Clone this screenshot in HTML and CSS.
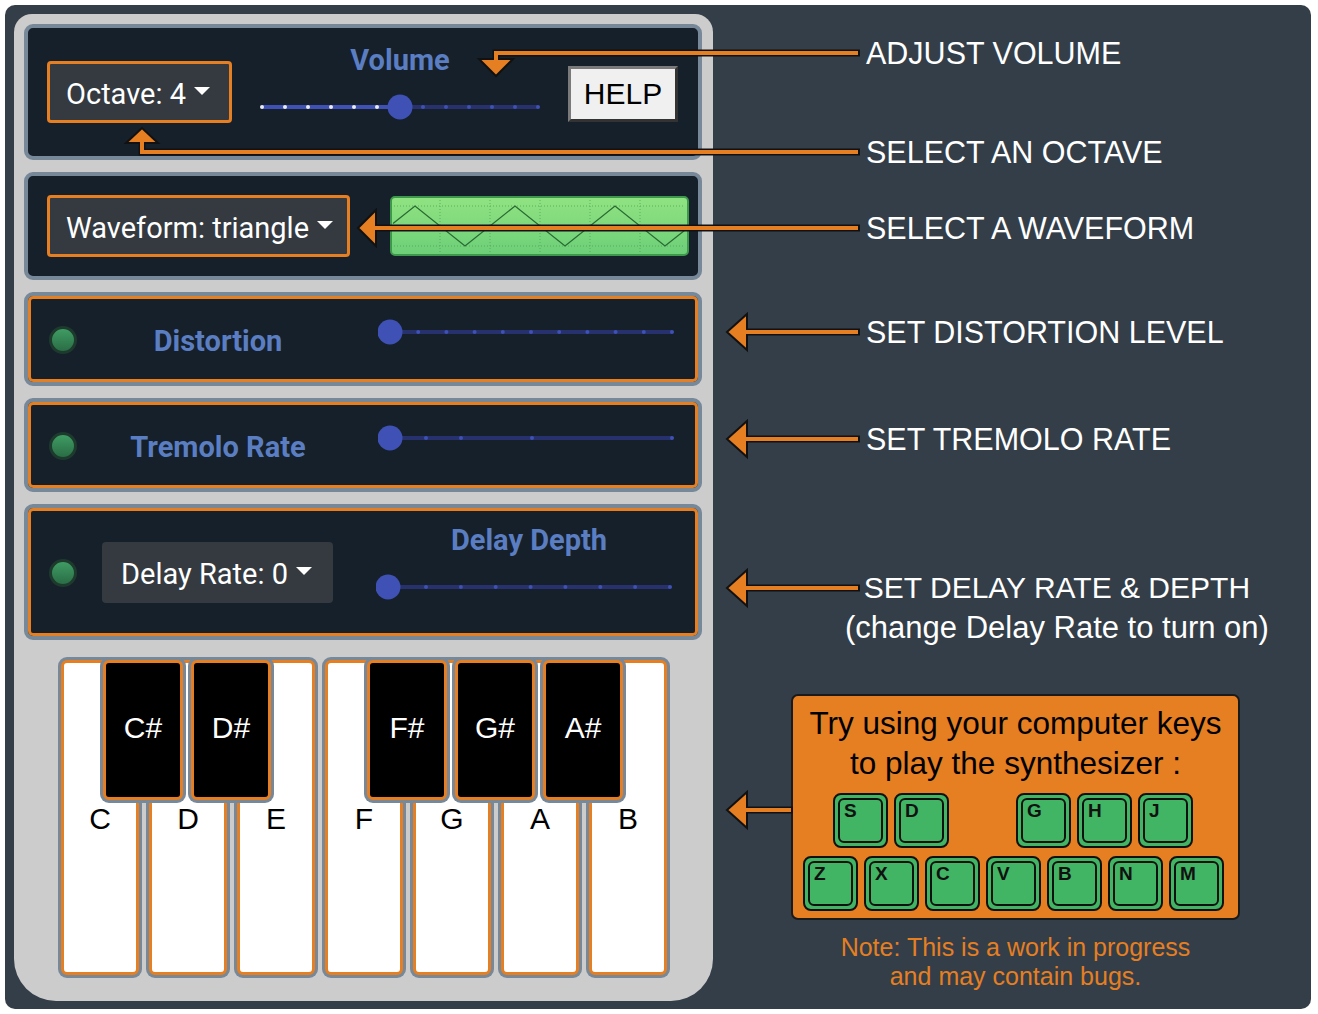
FILE: index.html
```html
<!DOCTYPE html>
<html lang="en">
<head>
<meta charset="utf-8">
<title>Synthesizer help</title>
<link rel="stylesheet" href="styles.css">
</head>
<body>
<div class="stage">
  <div class="frame">
    <div class="synth">
      <div class="panel panel-top">
        <div class="select orange sel-octave">Octave: 4<span class="caret"></span></div>
        <div class="volume">
          <div class="label">Volume</div>
          <svg class="slider vol-slider" width="280" height="26" viewBox="0 0 280 26">
            <line x1="2" y1="13" x2="140" y2="13" stroke="#3f51b5" stroke-width="4"/>
            <line x1="140" y1="13" x2="278" y2="13" stroke="#26316e" stroke-width="4"/>
            <g fill="#e8eaf6"><circle cx="2" cy="13" r="2"/><circle cx="25" cy="13" r="2"/><circle cx="48" cy="13" r="2"/><circle cx="71" cy="13" r="2"/><circle cx="94" cy="13" r="2"/><circle cx="117" cy="13" r="2"/></g>
            <g fill="#3f51b5"><circle cx="163" cy="13" r="2"/><circle cx="186" cy="13" r="2"/><circle cx="209" cy="13" r="2"/><circle cx="232" cy="13" r="2"/><circle cx="255" cy="13" r="2"/><circle cx="278" cy="13" r="2"/></g>
            <circle cx="140" cy="13" r="12.5" fill="#3f51b5"/>
          </svg>
        </div>
        <div class="help-btn">HELP</div>
      </div>

      <div class="panel panel-wave">
        <div class="select orange sel-wave">Waveform: triangle<span class="caret"></span></div>
        <svg class="scope" width="299" height="60" viewBox="0 0 299 60">
          <defs>
            <linearGradient id="scopeg" x1="0" y1="0" x2="0" y2="1">
              <stop offset="0" stop-color="#91e381"/>
              <stop offset="1" stop-color="#6ccf78"/>
            </linearGradient>
          </defs>
          <rect x="1" y="1" width="297" height="58" rx="4" fill="url(#scopeg)" stroke="#3d984b" stroke-width="2"/>
          <g stroke="#4f9e56" stroke-width="1" stroke-dasharray="1 2" opacity="0.75">
            <line x1="4" y1="10" x2="295" y2="10"/>
            <line x1="4" y1="50" x2="295" y2="50"/>
            <line x1="50" y1="4" x2="50" y2="56"/>
            <line x1="100" y1="4" x2="100" y2="56"/>
            <line x1="150" y1="4" x2="150" y2="56"/>
            <line x1="200" y1="4" x2="200" y2="56"/>
            <line x1="250" y1="4" x2="250" y2="56"/>
          </g>
          <polyline points="3,27.6 25,10 75,50 125,10 175,50 225,10 275,50 297,32.4" fill="none" stroke="#2a6a33" stroke-width="1.3"/>
        </svg>
      </div>

      <div class="panel hl panel-fx">
        <div class="led"></div>
        <div class="label fx-label">Distortion</div>
        <svg class="slider fx-slider" width="298" height="26" viewBox="0 0 298 26">
          <line x1="12" y1="13" x2="294" y2="13" stroke="#26316e" stroke-width="4"/>
          <g fill="#3f51b5"><circle cx="40.2" cy="13" r="2"/><circle cx="68.4" cy="13" r="2"/><circle cx="96.6" cy="13" r="2"/><circle cx="124.8" cy="13" r="2"/><circle cx="153" cy="13" r="2"/><circle cx="181.2" cy="13" r="2"/><circle cx="209.4" cy="13" r="2"/><circle cx="237.6" cy="13" r="2"/><circle cx="265.8" cy="13" r="2"/><circle cx="294" cy="13" r="2"/></g>
          <circle cx="12" cy="13" r="12.5" fill="#3f51b5"/>
        </svg>
      </div>

      <div class="panel hl panel-fx">
        <div class="led"></div>
        <div class="label fx-label">Tremolo Rate</div>
        <svg class="slider fx-slider" width="298" height="26" viewBox="0 0 298 26">
          <line x1="12" y1="13" x2="294" y2="13" stroke="#26316e" stroke-width="4"/>
          <g fill="#3f51b5"><circle cx="48" cy="13" r="2"/><circle cx="83" cy="13" r="2"/><circle cx="154" cy="13" r="2"/><circle cx="294" cy="13" r="2"/></g>
          <circle cx="12" cy="13" r="12.5" fill="#3f51b5"/>
        </svg>
      </div>

      <div class="panel hl panel-delay">
        <div class="led"></div>
        <div class="select sel-delay">Delay Rate: 0<span class="caret"></span></div>
        <div class="depth">
          <div class="label depth-label">Delay Depth</div>
          <svg class="slider" width="298" height="26" viewBox="0 0 298 26">
            <line x1="12" y1="13" x2="294" y2="13" stroke="#26316e" stroke-width="4"/>
            <g fill="#3f51b5"><circle cx="50" cy="13" r="2"/><circle cx="84.9" cy="13" r="2"/><circle cx="119.7" cy="13" r="2"/><circle cx="154.6" cy="13" r="2"/><circle cx="189.4" cy="13" r="2"/><circle cx="224.3" cy="13" r="2"/><circle cx="259.1" cy="13" r="2"/><circle cx="294" cy="13" r="2"/></g>
            <circle cx="12" cy="13" r="12.5" fill="#3f51b5"/>
          </svg>
        </div>
      </div>

      <div class="piano">
        <div class="wkey"><span class="bkey">C#</span>C</div>
        <div class="wkey"><span class="bkey">D#</span>D</div>
        <div class="wkey">E</div>
        <div class="wkey"><span class="bkey">F#</span>F</div>
        <div class="wkey"><span class="bkey">G#</span>G</div>
        <div class="wkey"><span class="bkey">A#</span>A</div>
        <div class="wkey">B</div>
      </div>
    </div>

    <div class="notes">
      <p class="note n-volume">ADJUST VOLUME</p>
      <p class="note n-octave">SELECT AN OCTAVE</p>
      <p class="note n-wave">SELECT A WAVEFORM</p>
      <p class="note n-dist">SET DISTORTION LEVEL</p>
      <p class="note n-trem">SET TREMOLO RATE</p>
      <div class="note-delay">
        <p class="note-main">SET DELAY RATE &amp; DEPTH</p>
        <p class="note-sub">(change Delay Rate to turn on)</p>
      </div>
      <div class="help-wrap">
        <div class="keyhelp">
          <p class="keyhelp-text">Try using your computer keys<br>to play the synthesizer :</p>
          <div class="keyrow keyrow-top">
            <div class="kbkey"><span class="cap">S</span></div>
            <div class="kbkey"><span class="cap">D</span></div>
            <div class="kbkey ghost"><span class="cap">F</span></div>
            <div class="kbkey"><span class="cap">G</span></div>
            <div class="kbkey"><span class="cap">H</span></div>
            <div class="kbkey"><span class="cap">J</span></div>
          </div>
          <div class="keyrow">
            <div class="kbkey"><span class="cap">Z</span></div>
            <div class="kbkey"><span class="cap">X</span></div>
            <div class="kbkey"><span class="cap">C</span></div>
            <div class="kbkey"><span class="cap">V</span></div>
            <div class="kbkey"><span class="cap">B</span></div>
            <div class="kbkey"><span class="cap">N</span></div>
            <div class="kbkey"><span class="cap">M</span></div>
          </div>
        </div>
        <p class="wip">Note: This is a work in progress<br>and may contain bugs.</p>
      </div>
    </div>
  </div>

  <svg class="arrows" width="1318" height="1014" viewBox="0 0 1318 1014">
    <g fill="none" stroke="#111" stroke-width="7">
      <path d="M860 53 H496 V60"/>
      <path d="M860 152 H142 V142"/>
      <path d="M860 228 H374"/>
      <path d="M860 332 H745"/>
      <path d="M860 439 H745"/>
      <path d="M860 588 H745"/>
      <path d="M793 810 H745"/>
    </g>
    <g fill="#e67e22" stroke="#111" stroke-width="2" stroke-linejoin="miter">
      <polygon points="479,59 513,59 496,76"/>
      <polygon points="126,143 158,143 142,128"/>
      <polygon points="358,228 376,210 376,246"/>
      <polygon points="727,332 747,314 747,350"/>
      <polygon points="727,439 747,421 747,457"/>
      <polygon points="727,588 747,570 747,606"/>
      <polygon points="727,810 747,792 747,828"/>
    </g>
    <g fill="none" stroke="#e67e22" stroke-width="4">
      <path d="M858 53 H496 V62"/>
      <path d="M858 152 H142 V140"/>
      <path d="M858 228 H372"/>
      <path d="M858 332 H743"/>
      <path d="M858 439 H743"/>
      <path d="M858 588 H743"/>
      <path d="M791 810 H743"/>
    </g>
  </svg>
</div>
</body>
</html>
```

FILE: styles.css
```css
* {
  box-sizing: border-box;
}

body {
  margin: 0;
  background: #ffffff;
  font-family: Roboto, "Liberation Sans", sans-serif;
}

.stage {
  position: relative;
  width: 1318px;
  height: 1014px;
  padding: 5px;
}

.frame {
  width: 1306px;
  height: 1004px;
  background: #333e48;
  border-radius: 10px;
  display: flex;
  align-items: flex-start;
}

/* ---------- synth panel ---------- */
.synth {
  margin: 9px 0 0 9px;
  width: 699px;
  height: 987px;
  background: #cccccc;
  border-radius: 18px 18px 42px 42px;
  padding: 10px 11px 0 10px;
  display: flex;
  flex-direction: column;
  gap: 12px;
  flex-shrink: 0;
}

.panel {
  background: #15202b;
  border: 4px solid #778899;
  border-radius: 9px;
  display: flex;
  align-items: center;
  flex-shrink: 0;
}

.panel.hl {
  box-shadow: inset 0 0 0 3px #e67e22;
}

.panel-top {
  height: 136px;
  padding-left: 19px;
}

.panel-wave {
  height: 108px;
  padding-left: 19px;
}

.panel-fx {
  height: 94px;
  padding-left: 21px;
}

.panel-delay {
  height: 136px;
  padding-left: 21px;
}

.select {
  height: 62px;
  background: #343a40;
  border-radius: 4px;
  color: #ffffff;
  font-size: 29px;
  display: flex;
  align-items: center;
  padding: 4px 16px 0;
  white-space: nowrap;
  flex-shrink: 0;
}

.select.orange {
  border: 3px solid #e67e22;
}

.caret {
  display: inline-block;
  width: 0;
  height: 0;
  border-top: 8px solid #ffffff;
  border-left: 8px solid transparent;
  border-right: 8px solid transparent;
  margin-left: 8px;
  margin-top: -6px;
}

.sel-octave {
  width: 185px;
}

.sel-wave {
  width: 303px;
}

.sel-delay {
  width: 231px;
  height: 61px;
  margin-left: 25px;
  padding-left: 19px;
}

.label {
  font-weight: 700;
  color: #5b7ec2;
  font-size: 29px;
  line-height: 30px;
  white-space: nowrap;
}

.volume {
  align-self: flex-start;
  margin-top: 17px;
  margin-left: 28px;
  width: 280px;
  display: flex;
  flex-direction: column;
  align-items: center;
}

.vol-slider {
  margin-top: 19px;
}

.slider {
  display: block;
  flex-shrink: 0;
}

.help-btn {
  margin-left: 28px;
  width: 110px;
  height: 56px;
  background: #f0f0f0;
  border: 3px solid;
  border-color: #7a7a7a #333333 #333333 #7a7a7a;
  font-family: "Liberation Sans", Arial, sans-serif;
  font-size: 30px;
  color: #000000;
  display: flex;
  align-items: center;
  justify-content: center;
  margin-top: 4px;
}

.scope {
  display: block;
  margin-left: 40px;
  flex-shrink: 0;
}

.led {
  width: 28px;
  height: 28px;
  border-radius: 50%;
  border: 3px solid #1d3a2d;
  background: linear-gradient(#3f9c63, #2a6d46);
  flex-shrink: 0;
  margin-top: 2px;
}

.fx-label {
  width: 256px;
  margin-left: 13px;
  text-align: center;
  margin-top: 4px;
}

.fx-slider {
  margin-left: 32px;
  margin-bottom: 14px;
}

.depth {
  align-self: flex-start;
  margin-top: 17px;
  margin-left: 43px;
  width: 298px;
  display: flex;
  flex-direction: column;
}

.depth-label {
  text-align: center;
  padding-left: 8px;
  margin-bottom: 19px;
}

/* ---------- piano ---------- */
.piano {
  display: flex;
  gap: 10px;
  margin: 8px 0 0 37px;
}

.wkey {
  position: relative;
  width: 78px;
  height: 315px;
  background: #ffffff;
  border: 3px solid #e67e22;
  border-radius: 6px;
  box-shadow: 0 0 0 3px #778899;
  font-family: "Liberation Sans", Arial, sans-serif;
  font-size: 30px;
  line-height: 36px;
  color: #000000;
  text-align: center;
  padding-top: 138px;
}

.bkey {
  position: absolute;
  z-index: 1;
  left: 39px;
  top: -3px;
  width: 80px;
  height: 140px;
  background: #000000;
  border: 3px solid #e67e22;
  border-radius: 6px;
  box-shadow: 0 0 0 3px #778899;
  color: #ffffff;
  display: flex;
  align-items: center;
  justify-content: center;
  padding-bottom: 4px;
}

/* ---------- right column ---------- */
.notes {
  flex: 1;
  padding-left: 78px;
  display: flex;
  flex-direction: column;
  align-items: flex-start;
  font-family: "Liberation Sans", Arial, sans-serif;
  color: #ffffff;
}

.note,
.note-main {
  margin: 0;
  font-size: 30.5px;
  line-height: 36px;
  white-space: nowrap;
}

.note {
  margin-left: 75px;
}

.n-volume { margin-top: 30px; }
.n-octave { margin-top: 63px; }
.n-wave { margin-top: 40px; }
.n-dist { margin-top: 68px; }
.n-trem { margin-top: 71px; }

.note-delay {
  margin: 113px 0 0 54px;
  text-align: center;
}

.note-main {
  font-size: 30px;
}

.note-sub {
  margin: 3px 0 0;
  font-size: 31px;
  line-height: 38px;
  white-space: nowrap;
}

.help-wrap {
  margin-top: 47px;
  width: 449px;
  text-align: center;
}

.keyhelp {
  height: 226px;
  background: #e67e22;
  border: 2px solid #1a1a1a;
  border-radius: 7px;
  padding: 7px 0 0 10px;
  color: #000000;
}

.keyhelp-text {
  margin: 0 0 10px -10px;
  font-size: 31.5px;
  line-height: 40px;
  white-space: nowrap;
}

.keyrow {
  display: flex;
  gap: 6px;
}

.keyrow-top {
  padding-left: 30px;
  margin-bottom: 8px;
}

.kbkey {
  width: 55px;
  height: 55px;
  border: 2px solid #111111;
  border-radius: 8px;
  background: #41b563;
  padding: 3px;
  display: flex;
}

.kbkey.ghost {
  visibility: hidden;
}

.cap {
  flex: 1;
  border: 2px solid #111111;
  border-radius: 6px;
  text-align: left;
  padding: 1px 0 0 4px;
  font-size: 19px;
  line-height: 19px;
  font-weight: 700;
  color: #111111;
}

.wip {
  margin: 13px 0 0;
  color: #e67e22;
  font-size: 25px;
  line-height: 29px;
}

/* ---------- annotation arrows ---------- */
.arrows {
  position: absolute;
  left: 0;
  top: 0;
  pointer-events: none;
}
```
